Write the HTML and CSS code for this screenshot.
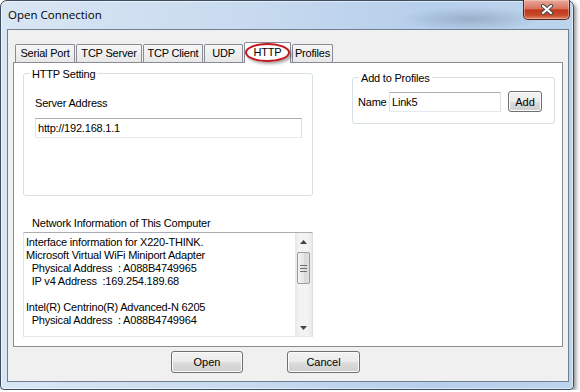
FILE: index.html
```html
<!DOCTYPE html>
<html lang="en">
<head>
    <meta charset="UTF-8">
    <title>Open Connection</title>
    <link rel="stylesheet" href="styles.css">
</head>
<body>
    <div class="window">
        <div class="titlebar">
            <span class="title">Open Connection</span>
            <div class="close-btn">
                <svg width="14" height="11" viewBox="0 0 14 11">
                    <path d="M3 2 L11 9 M11 2 L3 9" stroke="#4a4a4a" stroke-width="4.2" stroke-linecap="round"/>
                    <path d="M3 2 L11 9 M11 2 L3 9" stroke="#ffffff" stroke-width="2.2" stroke-linecap="round"/>
                </svg>
            </div>
        </div>

        <div class="client">
            <div class="tabs">
                <div class="tab tab-serial">Serial Port</div>
                <div class="tab tab-server">TCP Server</div>
                <div class="tab tab-client">TCP Client</div>
                <div class="tab tab-udp">UDP</div>
                <div class="tab tab-http tab-active">HTTP<span class="mark"></span></div>
                <div class="tab tab-profiles">Profiles</div>
            </div>

            <div class="panel">
                <div class="col-left">
                    <div class="group group-http">
                        <span class="group-label">HTTP Setting</span>
                        <div class="field-label">Server Address</div>
                        <div class="textbox textbox-url">http://192.168.1.1</div>
                    </div>

                    <div class="net-label">Network Information of This Computer</div>
                    <div class="netinfo">
<pre class="net-text">Interface information for X220-THINK.
Microsoft Virtual WiFi Miniport Adapter
  Physical Address  : A088B4749965
  IP v4 Address  :169.254.189.68

Intel(R) Centrino(R) Advanced-N 6205
  Physical Address  : A088B4749964</pre>
                        <div class="scrollbar">
                            <div class="sb-btn">
                                <svg width="7" height="4" viewBox="0 0 7 4"><path d="M0 4 L3.5 0 L7 4 Z" fill="#444"/></svg>
                            </div>
                            <div class="sb-thumb">
                                <svg width="7" height="7" viewBox="0 0 7 7">
                                    <path d="M0 0.5 H7 M0 3.5 H7 M0 6.5 H7" stroke="#6d6d6d" stroke-width="1"/>
                                </svg>
                            </div>
                            <div class="sb-space"></div>
                            <div class="sb-btn">
                                <svg width="7" height="4" viewBox="0 0 7 4"><path d="M0 0 L7 0 L3.5 4 Z" fill="#444"/></svg>
                            </div>
                        </div>
                    </div>
                </div>

                <div class="col-right">
                    <div class="group group-profile">
                        <span class="group-label">Add to Profiles</span>
                        <div class="profile-row">
                            <span class="name-label">Name</span>
                            <div class="textbox textbox-name">Link5</div>
                            <button class="btn btn-add">Add</button>
                        </div>
                    </div>
                </div>
            </div>

            <div class="actions">
                <button class="btn btn-open">Open</button>
                <button class="btn btn-cancel">Cancel</button>
            </div>
        </div>
    </div>
</body>
</html>
```

FILE: styles.css
```css
body {
    margin: 0;
    background: #fff;
    font-family: "Liberation Sans", Arial, sans-serif;
    font-size: 11px;
    letter-spacing: -0.2px;
    color: #000;
}
.window {
    width: 574px;
    height: 390px;
    box-sizing: border-box;
    border: 1px solid #3d4c5e;
    border-radius: 7px 7px 4px 4px;
    padding: 0 4px 7px 6px;
    display: flex;
    flex-direction: column;
    background:
        radial-gradient(ellipse 70px 12px at 470px 18px, rgba(95, 115, 140, 0.35), rgba(95, 115, 140, 0)),
        linear-gradient(to right, #d9e6f4 0%, #c9dbef 40%, #b6cfeb 75%, #bdd4ed 100%);
    box-shadow: 2px 2px 4px rgba(0, 0, 0, 0.45), inset 0 0 0 1px rgba(255, 255, 255, 0.55);
}
.titlebar {
    height: 28px;
    display: flex;
    justify-content: space-between;
    align-items: flex-start;
}
.title {
    padding: 6px 0 0 1px;
    font-family: "Open Sans", "Liberation Sans", sans-serif;
    font-size: 11.5px;
    letter-spacing: 0;
    line-height: 16px;
}
.close-btn {
    width: 47px;
    height: 20px;
    margin: -1px -1px 0 0;
    box-sizing: border-box;
    border: 1px solid #5a2119;
    border-top: none;
    border-radius: 0 0 5px 5px;
    background: linear-gradient(#e8a89b, #d9755f 45%, #c1371c 52%, #c8492a 80%, #dc8a6e);
    box-shadow: inset 0 0 0 1px rgba(255, 215, 205, 0.45);
    display: flex;
    align-items: center;
    justify-content: center;
}
.client {
    flex: 1;
    background: #f0f0f0;
    border: 1px solid #6e7f93;
    display: flex;
    flex-direction: column;
}

/* tabs */
.tabs {
    display: flex;
    align-items: flex-end;
    gap: 1px;
    padding: 12px 0 0 7px;
    margin-bottom: -1px;
    position: relative;
    z-index: 1;
}
.tab {
    height: 18px;
    margin-bottom: 1px;
    box-sizing: border-box;
    border: 1px solid #898c95;
    border-bottom: none;
    border-radius: 2px 2px 0 0;
    background: linear-gradient(#f6f6f6, #e7e7e7);
    text-align: center;
    line-height: 16px;
}
.tab-serial { width: 60px; }
.tab-server { width: 66px; }
.tab-client { width: 60px; }
.tab-udp { width: 39px; }
.tab-http { width: 47px; }
.tab-profiles { width: 41px; }
.tab-active {
    height: 21px;
    margin-bottom: 0;
    background: #fff;
    line-height: 18px;
    position: relative;
}
.mark {
    position: absolute;
    left: 0;
    top: 0;
    width: 45px;
    height: 19px;
    box-sizing: border-box;
    border: 2px solid #c3161b;
    border-radius: 50%;
    box-shadow: 2px 2px 3px rgba(0, 0, 0, 0.35);
}

/* panel */
.panel {
    margin: 0 5px;
    height: 285px;
    box-sizing: border-box;
    border: 1px solid #898c95;
    background: #fff;
    display: flex;
    gap: 39px;
    padding: 10px 0 0 9px;
}
.col-left {
    width: 290px;
}
.col-right {
    width: 203px;
    padding-top: 4px;
}
.group {
    border: 1px solid #d5dfe5;
    border-radius: 3px;
    box-sizing: border-box;
}
.group-label {
    display: block;
    width: fit-content;
    margin: -7px 0 0 6px;
    padding: 0 2px;
    background: #fff;
    line-height: 14px;
}
.group-http {
    height: 123px;
    padding-left: 11px;
}
.group-http .group-label {
    margin-left: -5px;
}
.field-label {
    margin-top: 16px;
    line-height: 13px;
}
.textbox {
    box-sizing: border-box;
    height: 20px;
    border: 1px solid;
    border-color: #abadb3 #dbdfe6 #e3e9ef #e2e3ea;
    background: #fff;
    line-height: 18px;
    padding-left: 2px;
}
.textbox-url {
    width: 267px;
    margin-top: 8px;
}
.net-label {
    margin: 21px 0 0 9px;
    line-height: 13px;
}
.netinfo {
    margin-top: 2px;
    height: 105px;
    box-sizing: border-box;
    border: 1px solid;
    border-color: #abadb3 #dbdfe6 #e3e9ef #e2e3ea;
    display: flex;
}
.net-text {
    flex: 1;
    margin: 0;
    padding: 3px 0 0 2px;
    font: inherit;
    line-height: 13px;
    white-space: pre;
    overflow: hidden;
}
.scrollbar {
    width: 17px;
    display: flex;
    flex-direction: column;
    background: linear-gradient(to right, #e6e6e6, #f3f3f3 25%, #f3f3f3 75%, #e9e9e9);
}
.sb-btn {
    height: 17px;
    display: flex;
    align-items: center;
    justify-content: center;
}
.sb-thumb {
    margin: 2px 2px 0;
    height: 32px;
    box-sizing: border-box;
    border: 1px solid #9b9b9b;
    border-radius: 2px;
    background: linear-gradient(to right, #f3f3f3, #e6e6e6 50%, #d9d9d9 51%, #dedede);
    display: flex;
    align-items: center;
    justify-content: center;
}
.sb-space {
    flex: 1;
}

/* add to profiles */
.group-profile {
    height: 47px;
}
.profile-row {
    display: flex;
    align-items: center;
    height: 21px;
    margin-top: 6px;
    padding-left: 5px;
}
.name-label {
    width: 31px;
}
.textbox-name {
    width: 112px;
}

/* buttons */
.btn {
    box-sizing: border-box;
    border: 1px solid #707070;
    border-radius: 3px;
    background: linear-gradient(#f2f2f2, #ebebeb 50%, #dddddd 51%, #cfcfcf);
    box-shadow: inset 0 0 0 1px #fcfcfc;
    font: inherit;
    color: #000;
    padding: 0;
}
.btn-add {
    width: 34px;
    height: 21px;
    margin-left: 7px;
}
.actions {
    display: flex;
    gap: 44px;
    padding: 4px 0 0 163px;
}
.btn-open {
    width: 72px;
    height: 22px;
}
.btn-cancel {
    width: 73px;
    height: 22px;
}
```
